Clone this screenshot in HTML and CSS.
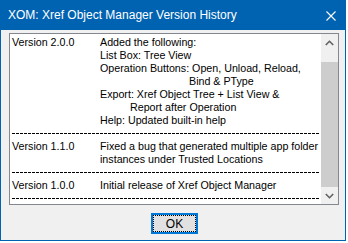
FILE: index.html
```html
<!DOCTYPE html>
<html lang="en">
<head>
  <meta charset="UTF-8">
  <title>XOM: Xref Object Manager Version History</title>
  <link rel="stylesheet" href="styles.css">
</head>
<body>
  <div class="window">
    <div class="titlebar">
      <span class="title">XOM: Xref Object Manager Version History</span>
      <svg class="close" width="10" height="10" viewBox="0 0 10 10">
        <path d="M0.5 0.5 L9.5 9.5 M9.5 0.5 L0.5 9.5" stroke="#fff" stroke-width="1.1" fill="none"/>
      </svg>
    </div>

    <div class="client">
      <div class="listbox">
        <div class="list">
          <div class="entry">
            <span class="ver">Version 2.0.0</span>
            <div class="notes">
              <div>Added the following:</div>
              <div>List Box: Tree View</div>
              <div>Operation Buttons: Open, Unload, Reload,</div>
              <div class="indent-wide">Bind &amp; PType</div>
              <div>Export: Xref Object Tree + List View &amp;</div>
              <div class="indent">Report after Operation</div>
              <div>Help: Updated built-in help</div>
            </div>
          </div>
          <div class="sep"></div>
          <div class="entry">
            <span class="ver">Version 1.1.0</span>
            <div class="notes">
              <div>Fixed a bug that generated multiple app folder</div>
              <div>instances under Trusted Locations</div>
            </div>
          </div>
          <div class="sep"></div>
          <div class="entry">
            <span class="ver">Version 1.0.0</span>
            <div class="notes">
              <div>Initial release of Xref Object Manager</div>
            </div>
          </div>
          <div class="sep"></div>
        </div>

        <div class="scrollbar">
          <div class="sb-btn">
            <svg width="9" height="6" viewBox="0 0 9 6"><path d="M0.8 5 L4.5 1.3 L8.2 5" stroke="#606060" stroke-width="1.6" fill="none"/></svg>
          </div>
          <div class="sb-track"></div>
          <div class="sb-thumb"></div>
          <div class="sb-btn">
            <svg width="9" height="6" viewBox="0 0 9 6"><path d="M0.8 1 L4.5 4.7 L8.2 1" stroke="#606060" stroke-width="1.6" fill="none"/></svg>
          </div>
        </div>
      </div>

      <div class="actions">
        <button class="ok">OK</button>
      </div>
    </div>
  </div>
</body>
</html>
```

FILE: styles.css
```css
body { margin: 0; background: #fff; }
.window { width: 344px; height: 240px; border: 1px solid #0063b1; border-top: 0; background: #f0f0f0; display: flex; flex-direction: column; }
.titlebar { height: 30px; flex: none; background: #0063b1; color: #fff; display: flex; align-items: center; justify-content: space-between; padding: 0 10px 0 8px; margin: 0 -1px; }
.title { font-family: "Liberation Sans", Arial, sans-serif; font-size: 12px; white-space: nowrap; }
.close { margin-top: 1px; }
.client { flex: 1; padding: 3px 6px 0 8px; display: flex; flex-direction: column; }
.listbox { height: 170px; flex: none; border: 1px solid #828790; background: #fff; display: flex; overflow: hidden; }
.list { flex: 1; min-width: 0; overflow: hidden; padding: 2px 0 0 2px; font-family: "Liberation Sans", Arial, sans-serif; font-size: 10.7px; line-height: 13px; color: #000; white-space: nowrap; }
.entry { display: flex; }
.ver { width: 88px; flex: none; }
.indent { padding-left: 30px; }
.indent-wide { padding-left: 89px; }
.sep { height: 13px; margin-right: 1px; background: repeating-linear-gradient(90deg, #000 0 3px, transparent 3px 4px) no-repeat 0 6px / 100% 1px; }
.scrollbar { width: 17px; flex: none; background: #f0f0f0; display: flex; flex-direction: column; }
.sb-btn { height: 17px; flex: none; display: flex; align-items: center; justify-content: center; }
.sb-track { height: 11px; flex: none; }
.sb-thumb { flex: 1; background: #cdcdcd; }
.actions { display: flex; justify-content: center; padding-top: 8px; padding-left: 1px; }
.ok { width: 47px; height: 21px; border: 2px solid #0078d7; background: #e1e1e1; font-family: "Liberation Sans", Arial, sans-serif; font-size: 12px; color: #000; padding: 0; outline: 1px dotted #000; outline-offset: -3px; }
```
